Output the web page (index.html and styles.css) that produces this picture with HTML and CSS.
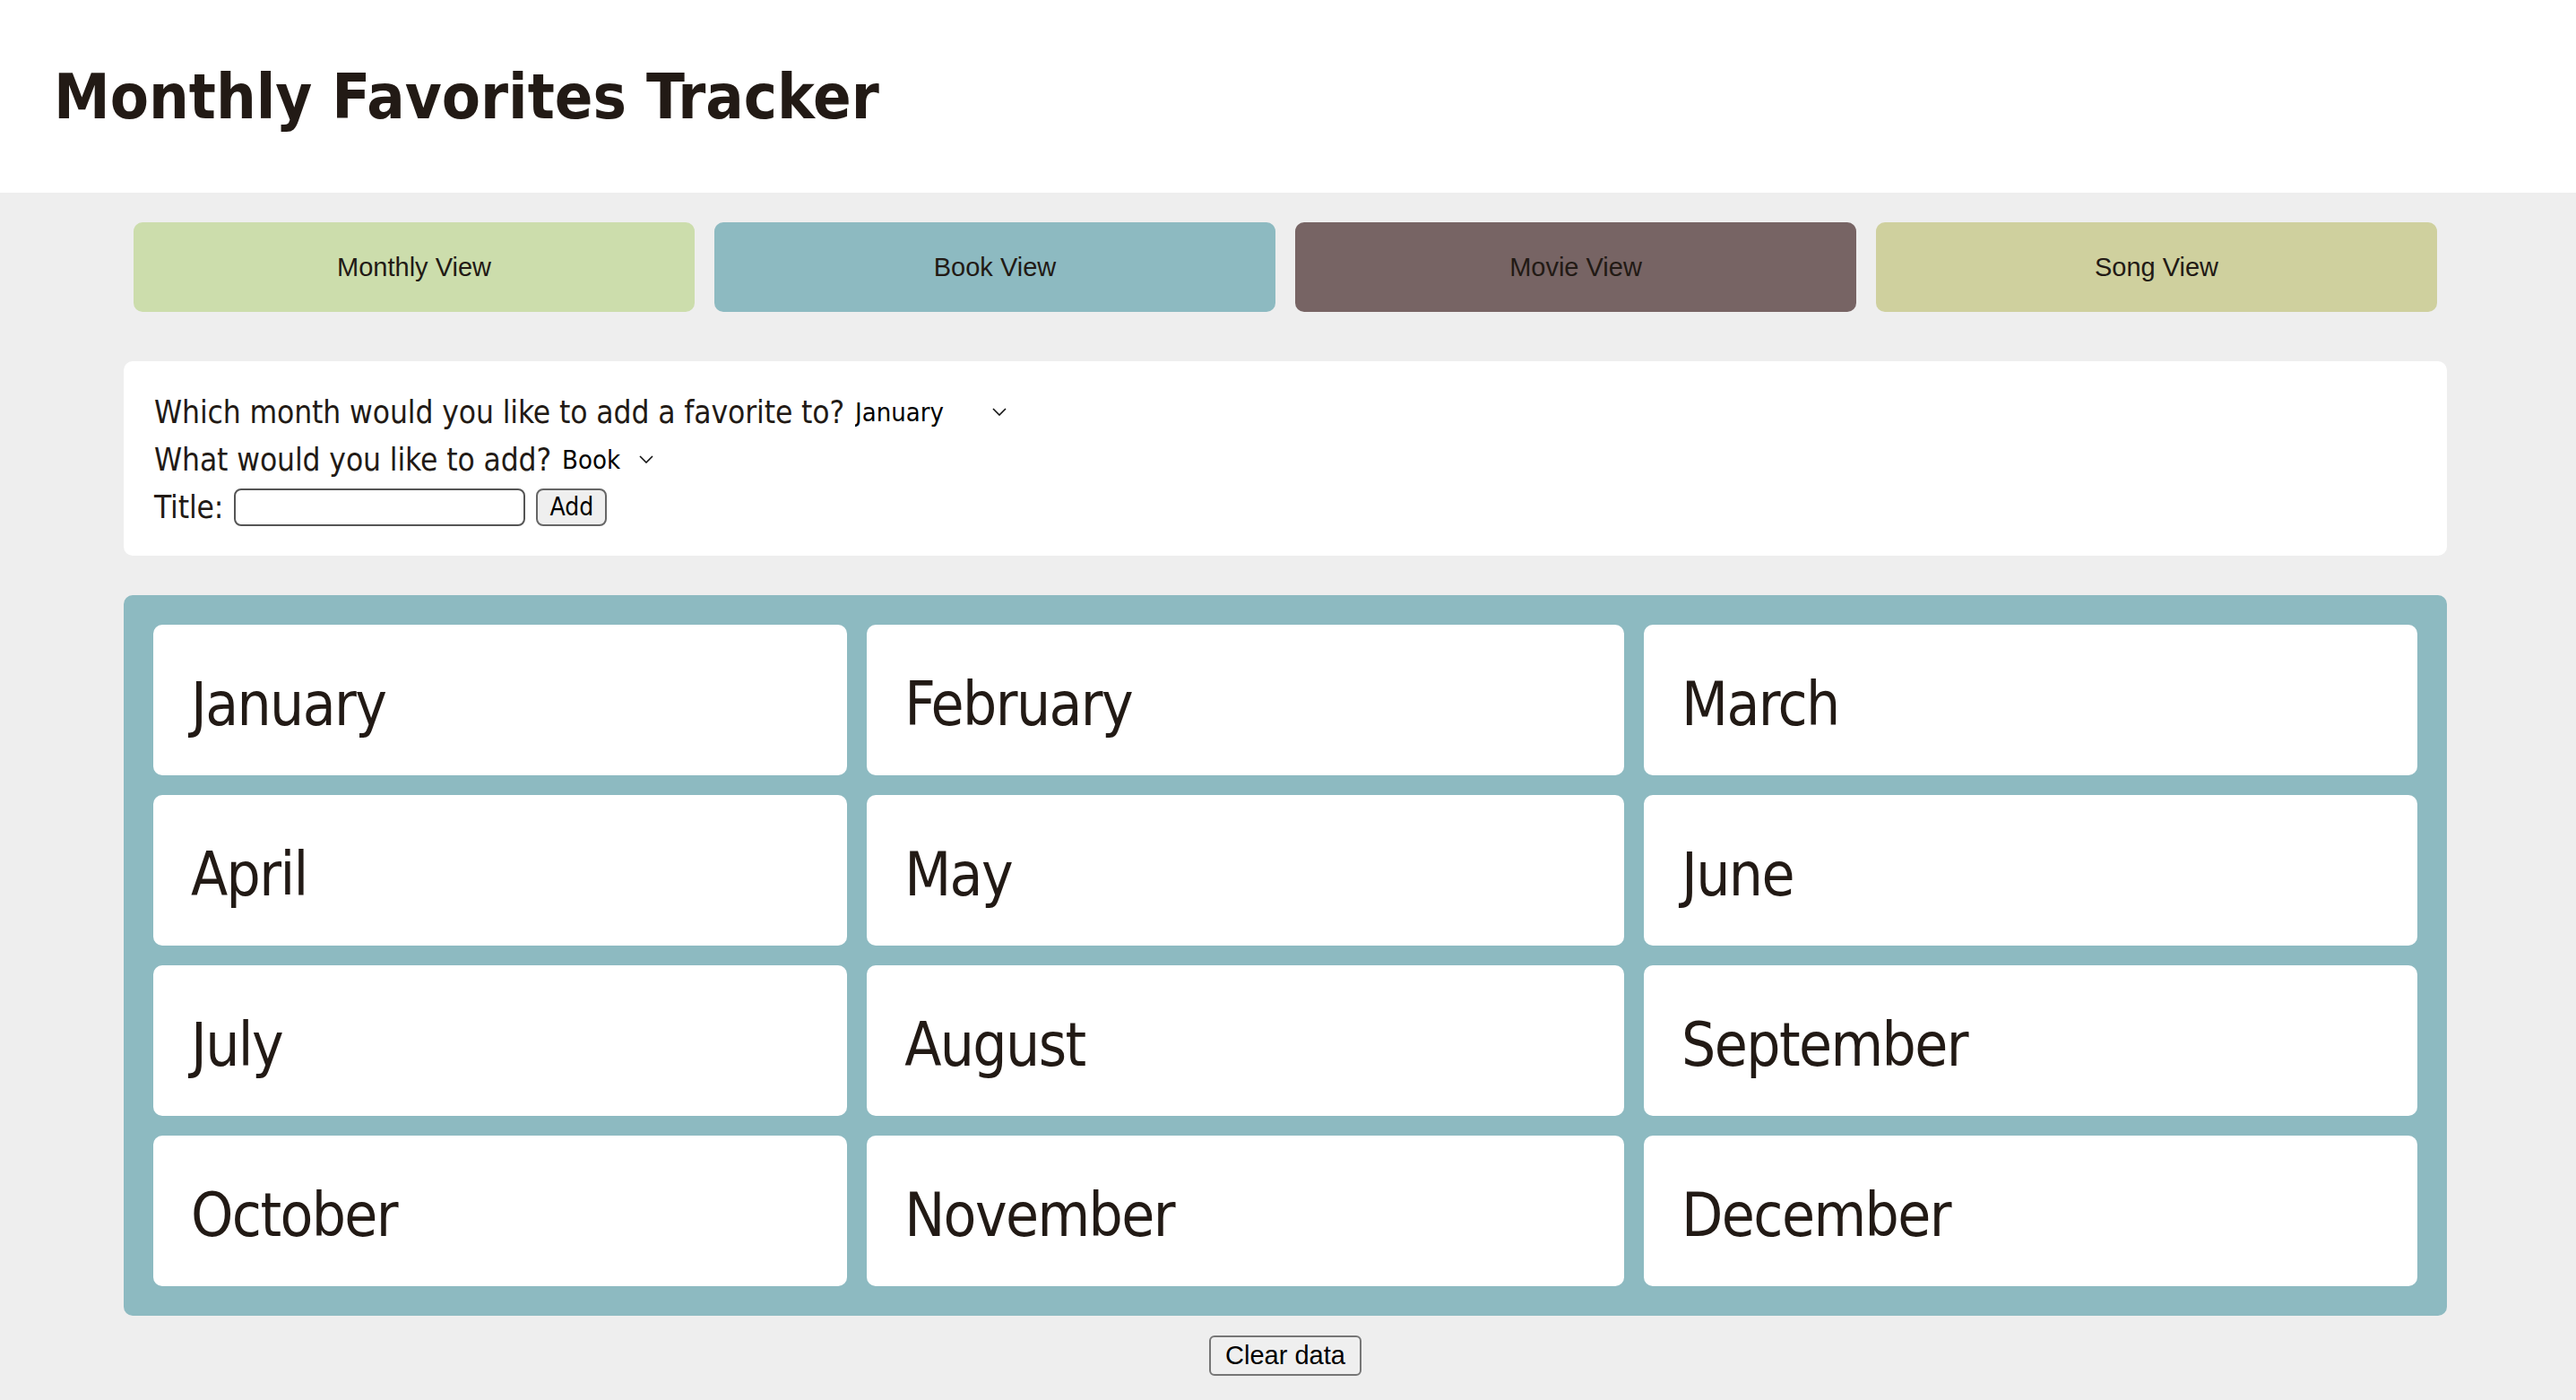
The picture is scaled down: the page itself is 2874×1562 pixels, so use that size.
FILE: index.html
```html
<!DOCTYPE html>
<html lang="en">
<head>
<meta charset="utf-8">
<title>Monthly Favorites Tracker</title>
<link rel="stylesheet" href="styles.css">
</head>
<body>
<header class="site-header">
  <h1 class="site-title">Monthly Favorites Tracker</h1>
</header>
<main class="page">
  <nav class="views">
    <button class="view-btn view-monthly" type="button">Monthly View</button>
    <button class="view-btn view-book" type="button">Book View</button>
    <button class="view-btn view-movie" type="button">Movie View</button>
    <button class="view-btn view-song" type="button">Song View</button>
  </nav>

  <form class="add-card">
    <div class="form-row">
      <span class="form-label">Which month would you like to add a favorite to?</span>
      <span class="select-wrap">
        <select class="plain-select">
          <option>January</option><option>February</option><option>March</option>
          <option>April</option><option>May</option><option>June</option>
          <option>July</option><option>August</option><option>September</option>
          <option>October</option><option>November</option><option>December</option>
        </select>
        <svg class="chevron" viewBox="0 0 16 9" width="16" height="9"><path d="M1 1 L8 8 L15 1" fill="none" stroke="#111" stroke-width="1.6"/></svg>
      </span>
    </div>
    <div class="form-row">
      <span class="form-label">What would you like to add?</span>
      <span class="select-wrap">
        <select class="plain-select">
          <option>Book</option><option>Movie</option><option>Song</option>
        </select>
        <svg class="chevron" viewBox="0 0 16 9" width="16" height="9"><path d="M1 1 L8 8 L15 1" fill="none" stroke="#111" stroke-width="1.6"/></svg>
      </span>
    </div>
    <div class="form-row">
      <span class="form-label">Title:</span>
      <input class="title-input" type="text">
      <button class="add-btn" type="button">Add</button>
    </div>
  </form>

  <section class="months">
    <div class="month-card">January</div>
    <div class="month-card">February</div>
    <div class="month-card">March</div>
    <div class="month-card">April</div>
    <div class="month-card">May</div>
    <div class="month-card">June</div>
    <div class="month-card">July</div>
    <div class="month-card">August</div>
    <div class="month-card">September</div>
    <div class="month-card">October</div>
    <div class="month-card">November</div>
    <div class="month-card">December</div>
  </section>

  <div class="actions">
    <button class="clear-btn" type="button">Clear data</button>
  </div>
</main>
</body>
</html>
```
FILE: styles.css
```css
html, body {
  margin: 0;
  padding: 0;
}
body {
  background: #eeeeee;
  color: #221a15;
  font-family: "DejaVu Sans Condensed", "DejaVu Sans", sans-serif;
}
.site-header {
  background: #ffffff;
  height: 215px;
  display: flex;
  align-items: center;
  padding-left: 60px;
  box-sizing: border-box;
}
.site-title {
  margin: 0;
  font-size: 70px;
  font-weight: bold;
  line-height: 1;
}
.page {
  width: 2592px;
  margin-left: 138px;
  padding-bottom: 24px;
}
.views {
  display: grid;
  grid-template-columns: repeat(4, 1fr);
  gap: 22px;
  padding: 0 11px;
  margin-top: 33px;
}
.view-btn {
  height: 100px;
  border: none;
  border-radius: 10px;
  font-family: "Liberation Sans", Arial, sans-serif;
  font-size: 29px;
  color: #221a15;
}
.view-monthly { background: #ccddac; }
.view-book { background: #8dbac1; }
.view-movie { background: #776464; }
.view-song { background: #cfd09e; }

.add-card {
  margin-top: 55px;
  background: #ffffff;
  border-radius: 10px;
  padding: 30px 34px 28px;
}
.form-row {
  display: flex;
  align-items: center;
  height: 53px;
  gap: 10px;
  font-size: 35px;
  letter-spacing: -0.1px;
}
.select-wrap {
  display: inline-flex;
  align-items: center;
  gap: 8px;
  padding-left: 2px;
}
.plain-select {
  appearance: none;
  -webkit-appearance: none;
  border: none;
  background: transparent;
  padding: 0;
  margin: 0;
  font-family: "DejaVu Sans Condensed", "DejaVu Sans", sans-serif;
  font-size: 29px;
  color: #000;
}
.chevron {
  display: block;
}
.title-input {
  width: 325px;
  height: 42px;
  box-sizing: border-box;
  border: 2px solid #555555;
  border-radius: 8px;
  margin: 0 0 0 2px;
  background: #fff;
}
.add-btn {
  height: 42px;
  width: 79px;
  box-sizing: border-box;
  border: 2px solid #666666;
  border-radius: 8px;
  background: #efefef;
  font-family: "DejaVu Sans Condensed", "DejaVu Sans", sans-serif;
  font-size: 28px;
  color: #000;
  padding: 0;
  margin-left: 2px;
}

.months {
  margin-top: 44px;
  background: #8dbac1;
  border-radius: 10px;
  padding: 33px;
  display: grid;
  grid-template-columns: repeat(3, auto);
  gap: 22px;
}
.month-card {
  background: #ffffff;
  border-radius: 10px;
  height: 168px;
  box-sizing: border-box;
  display: flex;
  align-items: center;
  padding: 10px 20px 0 42px;
  font-size: 67px;
  letter-spacing: -1.6px;
}
.actions {
  margin-top: 22px;
  text-align: center;
}
.clear-btn {
  font-family: "Liberation Sans", Arial, sans-serif;
  font-size: 29px;
  color: #000;
  background: #efefef;
  border: 2px solid #767676;
  border-radius: 6px;
  height: 45px;
  padding: 0 16px;
}
```
